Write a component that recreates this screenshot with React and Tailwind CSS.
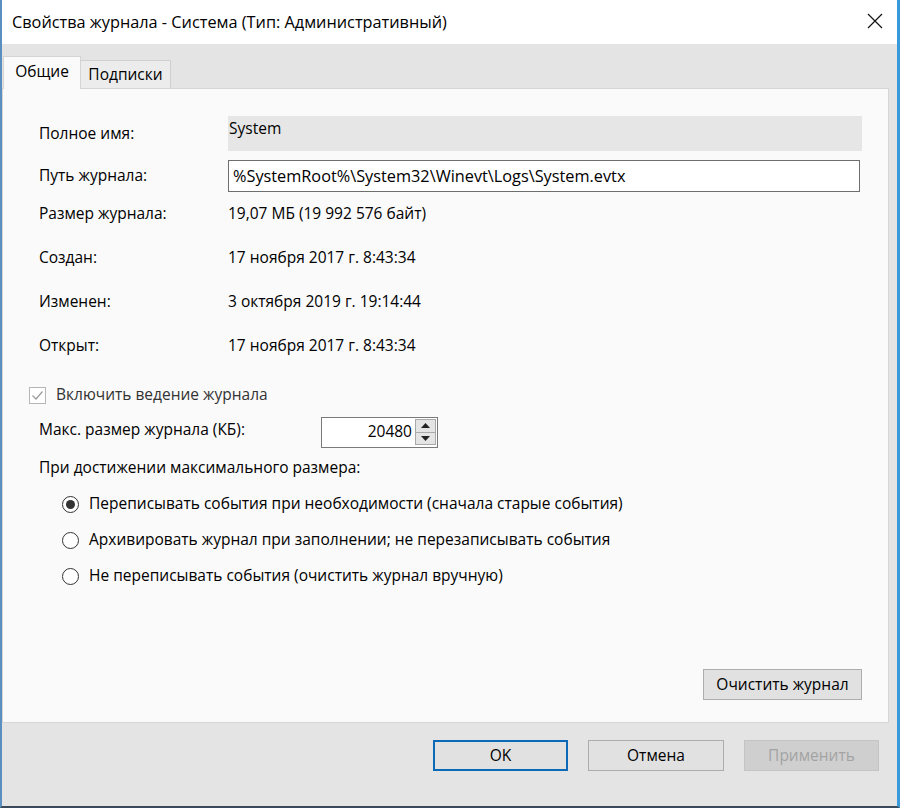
import React from "react";

const font = { fontFamily: '"Open Sans", "Noto Sans", sans-serif' };

const InfoRow = ({ label, value }) => (
  <div className="flex h-[44px] items-center">
    <div className="w-[189px] shrink-0">{label}</div>
    <div>{value}</div>
  </div>
);

const Radio = ({ checked, children }) => (
  <div className="flex h-[36px] items-center gap-[10px] pl-[23px]">
    <span className="flex h-[17px] w-[17px] items-center justify-center rounded-full border border-[#333] bg-white">
      {checked && <span className="h-[9px] w-[9px] rounded-full bg-[#333]" />}
    </span>
    <span>{children}</span>
  </div>
);

const Button = ({ children, primary, disabled, className = "" }) => (
  <button
    className={
      "flex h-[31px] items-center justify-center " +
      (primary
        ? "border-2 border-[#0a6ab8] bg-[#e1e1e1] text-black "
        : disabled
        ? "border border-[#c4c4c4] bg-[#cfcfcf] text-[#a3a3a3] "
        : "border border-[#adadad] bg-[#e1e1e1] text-black ") +
      className
    }
  >
    {children}
  </button>
);

export default function App() {
  return (
    <div
      className="flex h-[808px] w-[900px] flex-col overflow-hidden border-l-2 border-r-[3px] border-b-2 border-l-[#5b8fbf] border-r-[#3a9ad9] border-b-[#3b4a5a] bg-[#e4e4e4] text-[15.5px] text-black"
      style={font}
    >
      {/* title bar */}
      <div className="flex h-[44px] shrink-0 items-center justify-between bg-white pl-[10px] pr-[14px]">
        <span className="text-[16.3px]">Свойства журнала - Система (Тип: Административный)</span>
        <svg width="16" height="16" viewBox="0 0 16 16" className="mb-[2px]">
          <path d="M1 1 L15 15 M15 1 L1 15" stroke="#111" strokeWidth="1.2" fill="none" />
        </svg>
      </div>

      {/* tabs */}
      <div className="mt-[12px] flex h-[32px] shrink-0 items-end pl-[1px]">
        <div className="relative z-10 -mb-px flex h-[33px] w-[78px] items-center justify-center border border-b-0 border-[#d4d4d4] bg-[#fafafa] pb-[2px]">
          Общие
        </div>
        <div className="flex h-[28px] w-[90px] items-center justify-center border border-b-0 border-l-0 border-[#cfcfcf] bg-[#ececec]">
          Подписки
        </div>
      </div>

      {/* panel */}
      <div className="mr-[8px] flex h-[635px] shrink-0 flex-col border border-[#d6d6d6] bg-[#fafafa] pl-[36px] pr-[26px]">
        <div className="mt-[27px] flex h-[35px] items-center">
          <div className="w-[189px] shrink-0">Полное имя:</div>
          <div className="flex h-full flex-1 items-start bg-[#e6e6e6] pl-[1px] pt-[1px]">System</div>
        </div>
        <div className="mt-[9px] flex h-[32px] items-center">
          <div className="w-[189px] shrink-0">Путь журнала:</div>
          <div className="mr-[2px] flex h-full flex-1 items-center border border-[#6e6e6e] bg-white pl-[4px] text-[16.3px]">
            %SystemRoot%\System32\Winevt\Logs\System.evtx
          </div>
        </div>
        <InfoRow label="Размер журнала:" value="19,07 МБ (19 992 576 байт)" />
        <InfoRow label="Создан:" value="17 ноября 2017 г. 8:43:34" />
        <InfoRow label="Изменен:" value="3 октября 2019 г. 19:14:44" />
        <InfoRow label="Открыт:" value="17 ноября 2017 г. 8:43:34" />

        <div className="mt-[8px] flex h-[38px] items-center gap-[10px] -ml-[10px]">
          <span className="flex h-[17px] w-[17px] items-center justify-center border border-[#b5b5b5] bg-white">
            <svg width="13" height="13" viewBox="0 0 13 13">
              <path d="M1.5 6.5 L5 10 L11.5 2.5" stroke="#9a9a9a" strokeWidth="1.2" fill="none" />
            </svg>
          </span>
          <span className="text-[#333]">Включить ведение журнала</span>
        </div>

        <div className="flex h-[36px] items-center">
          <div className="w-[282px] shrink-0 pb-[4px]">Макс. размер журнала (КБ):</div>
          <div className="flex h-[31px] w-[117px] items-center border border-[#7a7a7a] bg-white">
            <div className="flex-1 pr-[3px] text-right">20480</div>
            <div className="mr-[1px] flex h-[26px] w-[21px] flex-col">
              <div className="flex flex-1 items-center justify-center border border-[#a9a9a9] bg-[#e4e4e4]">
                <svg width="9" height="5" viewBox="0 0 9 5">
                  <path d="M0 5 L4.5 0 L9 5 Z" fill="#222" />
                </svg>
              </div>
              <div className="flex flex-1 items-center justify-center border border-t-0 border-[#a9a9a9] bg-[#e4e4e4]">
                <svg width="9" height="5" viewBox="0 0 9 5">
                  <path d="M0 0 L4.5 5 L9 0 Z" fill="#222" />
                </svg>
              </div>
            </div>
          </div>
        </div>

        <div className="flex h-[36px] items-center">При достижении максимального размера:</div>

        <div>
          <Radio checked>Переписывать события при необходимости (сначала старые события)</Radio>
          <Radio>Архивировать журнал при заполнении; не перезаписывать события</Radio>
          <Radio>Не переписывать события (очистить журнал вручную)</Radio>
        </div>

        <div className="mt-auto mb-[22px] flex justify-end">
          <Button className="w-[159px]">Очистить журнал</Button>
        </div>
      </div>

      {/* bottom buttons */}
      <div className="flex flex-1 items-start justify-end gap-[20px] pr-[18px] pt-[17px]">
        <Button primary className="w-[135px]">OK</Button>
        <Button className="w-[136px]">Отмена</Button>
        <Button disabled className="w-[135px]">Применить</Button>
      </div>
    </div>
  );
}
